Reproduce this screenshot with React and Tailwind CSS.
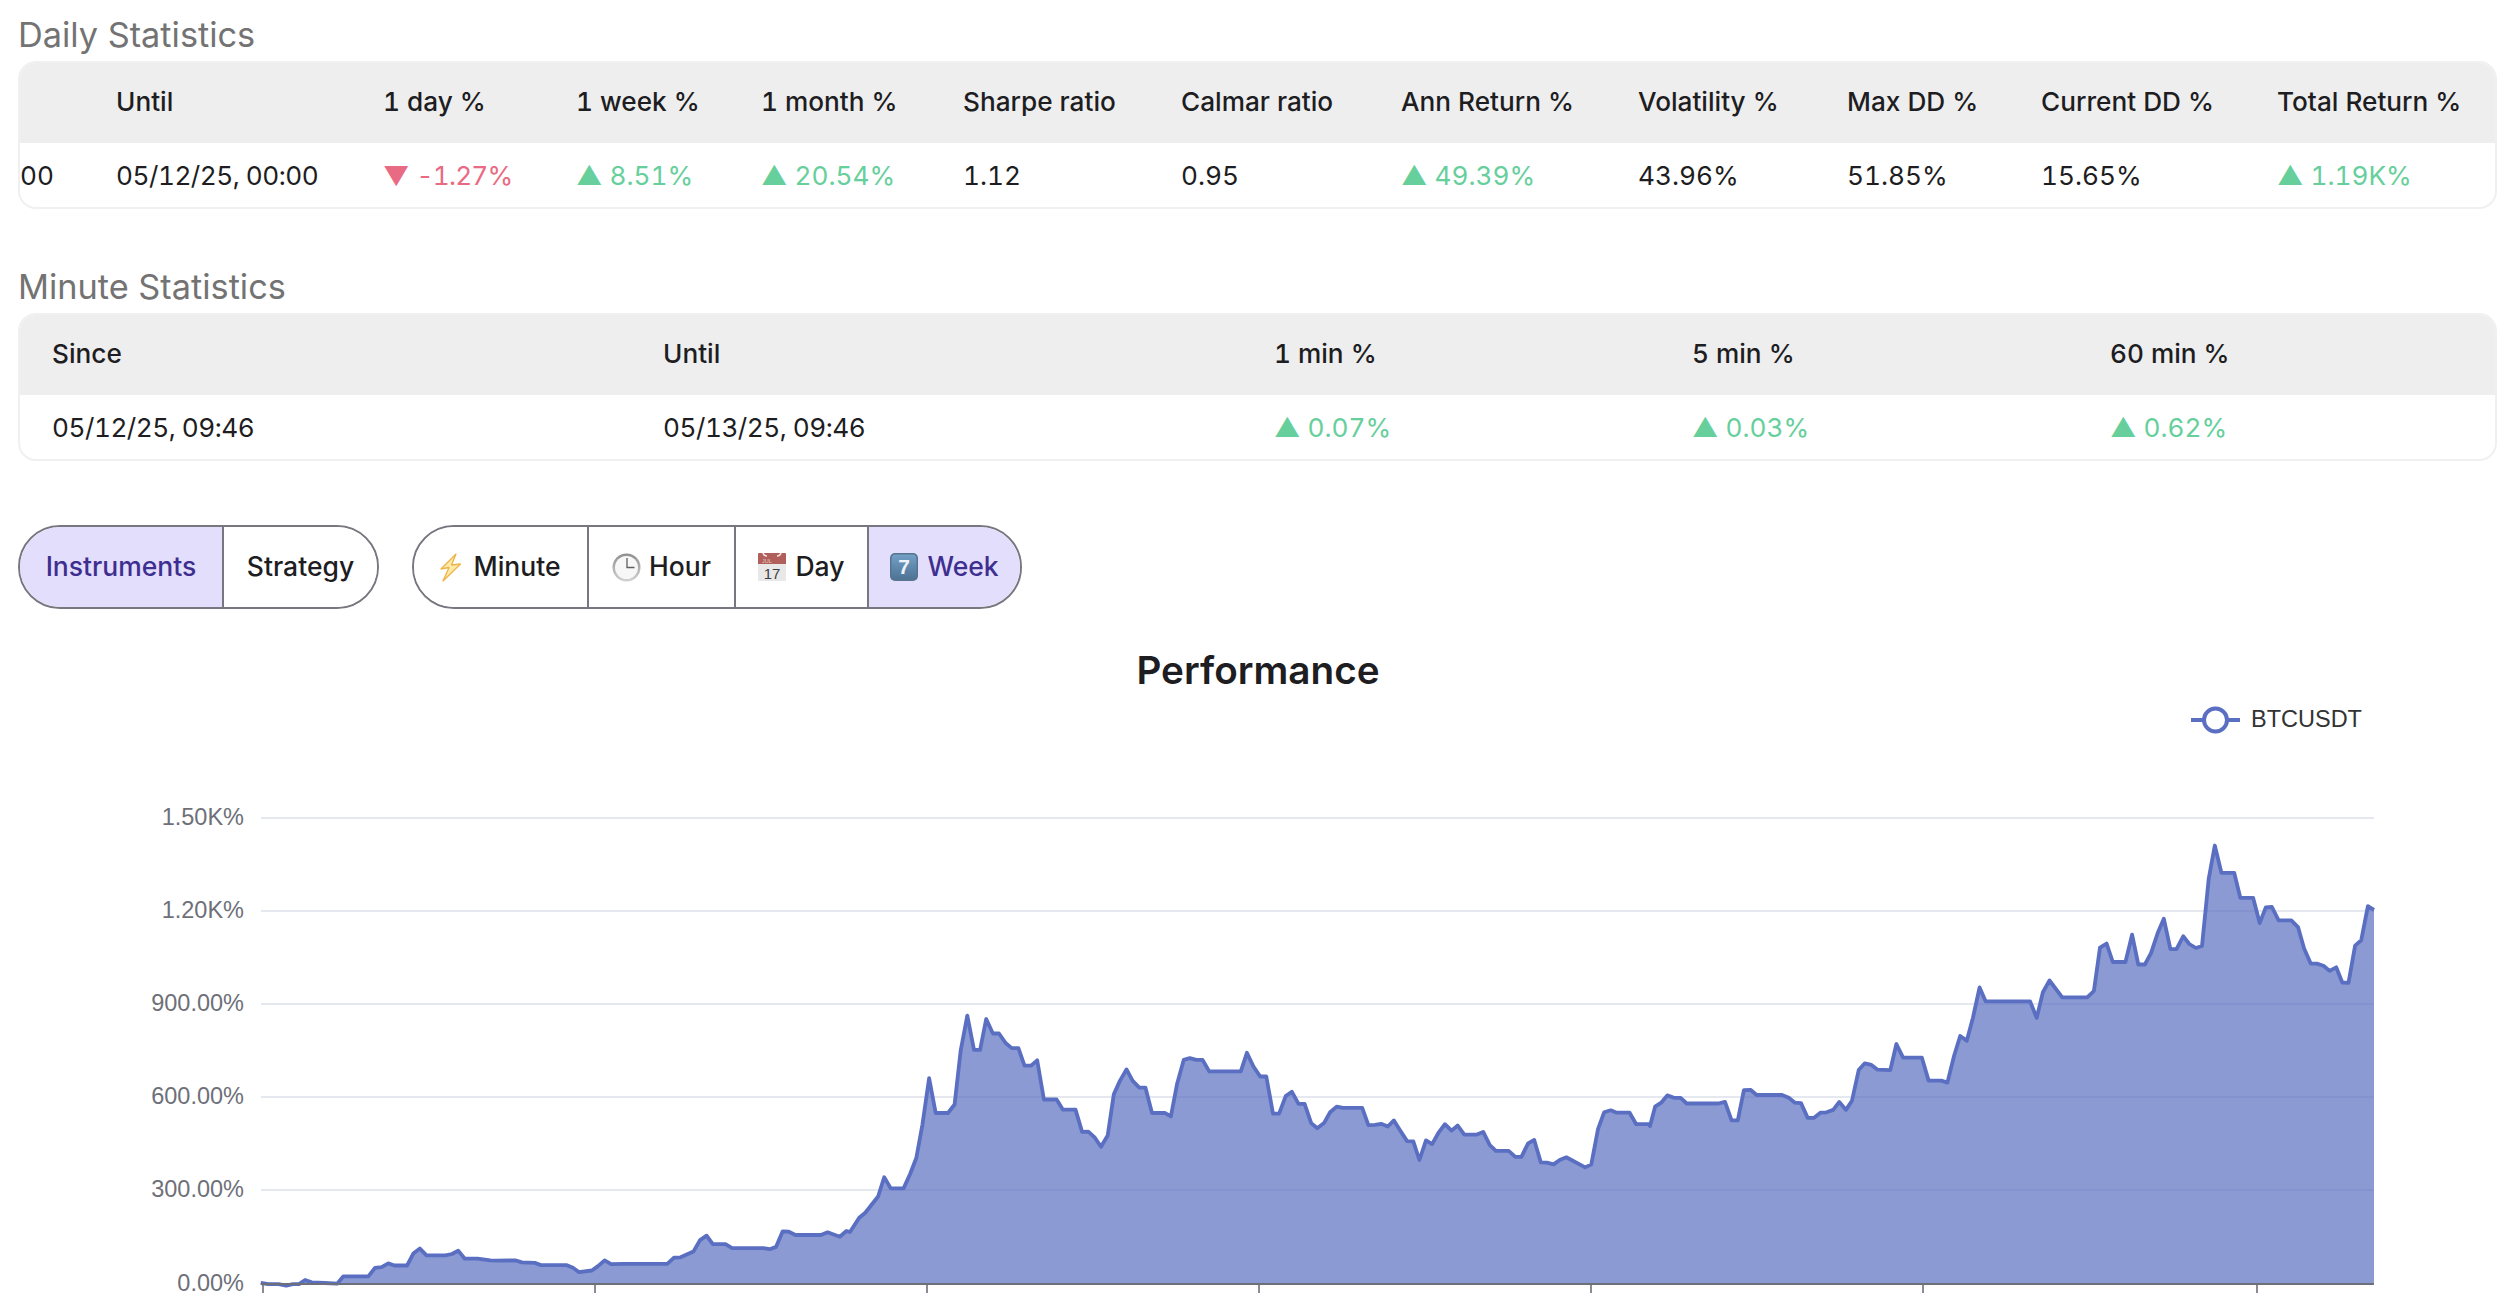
import React from 'react';

const INTER = { fontFamily: 'Inter, sans-serif' };

// traced from the chart, each block in its own crop coordinates
const seg1 = [[315,1488],[330,1491],[350,1491],[365,1496],[378,1491],[390,1491],[402,1479],[415,1486],[440,1488],[465,1490],[477,1468],[526,1468],[539,1443],[552,1441],[565,1430],[577,1436],[602,1436],[614,1401],[627,1386],[640,1406],[677,1406],[690,1402],[702,1392],[715,1416],[740,1416],[765,1421],[777,1422],[814,1421],[827,1427],[852,1428],[864,1435],[914,1435],[927,1443],[939,1456],[964,1451],[976,1438],[989,1421],[1002,1432],[1026,1431],[1112,1431],[1125,1413],[1138,1412],[1163,1395],[1176,1361],[1189,1348],[1201,1373],[1226,1373],[1239,1385],[1300,1385],[1313,1388],[1325,1381],[1338,1335],[1350,1336],[1363,1346],[1413,1346],[1426,1338],[1450,1351],[1463,1334]];
const seg2 = [[0,1337],[18,1295],[30,1280],[55,1232],[67,1175],[80,1208],[105,1208],[118,1165],[130,1118],[142,1020],[155,882],[168,985],[192,985],[205,960],[217,800],[230,697],[243,798],[255,798],[267,707],[280,750],[292,750],[305,778],[317,793],[330,793],[342,845],[355,845],[367,829],[380,945],[405,945],[417,975],[442,975],[455,1041],[467,1040],[480,1058],[492,1085],[505,1052],[517,930],[529,890],[542,856],[554,890],[567,910],[579,910],[592,985],[617,985],[629,995],[641,900],[654,828],[666,823],[679,828],[691,828],[704,862],[766,862],[778,807],[791,848],[804,877],[816,877],[829,987],[841,987],[854,935],[866,922],[879,958],[891,958],[904,1015],[916,1030],[929,1015],[941,983],[954,966],[966,970],[1004,970],[1016,1021],[1029,1020],[1041,1017],[1054,1025],[1066,1007],[1079,1038],[1092,1068],[1104,1069],[1116,1124],[1129,1066],[1141,1077],[1154,1042],[1166,1018],[1179,1037],[1191,1022],[1204,1049],[1229,1049],[1241,1041],[1254,1080],[1266,1097],[1291,1097],[1304,1115],[1316,1115],[1329,1075],[1341,1065],[1354,1131],[1366,1132],[1379,1137],[1391,1124],[1404,1116],[1441,1146],[1453,1137],[1466,1033],[1478,983],[1491,977],[1503,984],[1528,984],[1541,1018],[1566,1018]];
const seg3 = [[0,1110],[10,1062],[22,1052],[34,1034],[47,1040],[60,1040],[72,1054],[134,1054],[147,1050],[160,1096],[172,1096],[184,1021],[197,1020],[209,1033],[259,1033],[272,1040],[284,1052],[296,1053],[309,1090],[321,1090],[334,1077],[346,1076],[359,1070],[371,1050],[384,1070],[396,1047],[409,971],[421,954],[434,958],[446,970],[471,971],[483,906],[496,940],[533,940],[546,997],[571,997],[583,1002],[596,935],[608,886],[621,898],[633,840],[646,765],[658,800],[745,800],[758,841],[770,777],[783,748],[808,790],[857,790],[870,774],[882,666],[895,656],[907,702],[932,702],[945,634],[957,708],[970,708],[982,680],[995,630],[1007,594],[1020,670],[1032,670],[1045,638],[1057,657],[1070,667],[1082,662],[1095,495],[1107,412],[1120,480],[1145,480],[1157,542],[1182,542],[1195,605],[1207,566],[1219,565],[1232,598],[1257,598],[1270,615],[1282,668],[1295,706],[1307,706],[1320,711],[1332,724],[1345,715],[1357,753],[1369,754],[1382,661],[1394,648],[1407,563],[1419,572]];

const points = [
  ...seg1.map(([x, y]) => [100 + x / 1.96, 780 + y / 2.958]),
  ...seg2.map(([x, y]) => [850 + x / 1.96, 780 + y / 2.958]),
  ...seg3.map(([x, y]) => [1650 + x / 1.96, 680 + y / 2.489]),
];
const linePath = points.map(([x, y], i) => `${i ? 'L' : 'M'}${x.toFixed(1)} ${y.toFixed(1)}`).join(' ');
const areaPath = `${linePath} L2374 1284 L261 1284 Z`;

const grid = [
  ['1.50K%', 818],
  ['1.20K%', 911],
  ['900.00%', 1004],
  ['600.00%', 1097],
  ['300.00%', 1190],
  ['0.00%', 1284],
];
const ticks = [263, 595, 927, 1259, 1591, 1923, 2257];

const Change = ({ dir, children }) => (
  <span className={dir === 'down' ? 'text-[#e96b83]' : 'text-[#66cf9c]'}>
    {dir === 'down' ? '▼' : '▲'} <span className={dir === 'down' ? 'tracking-[-0.8px]' : ''}>{children}</span>
  </span>
);

const Stamp = ({ children }) => <span className="tracking-[-0.5px]">{children}</span>;

const daily = [
  ['', 'Until', '1 day %', '1 week %', '1 month %', 'Sharpe ratio', 'Calmar ratio', 'Ann Return %', 'Volatility %', 'Max DD %', 'Current DD %', 'Total Return %'],
  [
    '00',
    <Stamp>05/12/25, 00:00</Stamp>,
    <Change dir="down">-1.27%</Change>,
    <Change>8.51%</Change>,
    <Change>20.54%</Change>,
    '1.12',
    '0.95',
    <Change>49.39%</Change>,
    '43.96%',
    '51.85%',
    '15.65%',
    <Change>1.19K%</Change>,
  ],
];

const minute = [
  ['Since', 'Until', '1 min %', '5 min %', '60 min %'],
  [<Stamp>05/12/25, 09:46</Stamp>, <Stamp>05/13/25, 09:46</Stamp>, <Change>0.07%</Change>, <Change>0.03%</Change>, <Change>0.62%</Change>],
];

const StatTable = ({ rows, cols, clipFirst }) => (
  <div className="rounded-[18px] border-2 border-[#f0f0f0] overflow-hidden text-[26.2px] text-[#1d1d22] tabular-nums">
    <div className={`grid ${cols} h-[81px] items-center bg-[#eeeeef] -mt-[1px] pb-[1px] font-medium whitespace-nowrap`}>
      {rows[0].map((c, i) => (
        <div key={i} className={clipFirst && i === 0 ? '' : 'pl-[32px]'}>{c}</div>
      ))}
    </div>
    <div className={`grid ${cols} h-[64px] items-center pt-[1px] whitespace-nowrap`}>
      {rows[1].map((c, i) => (
        <div key={i} className={clipFirst && i === 0 ? '' : 'pl-[32px]'}>{c}</div>
      ))}
    </div>
  </div>
);

const Bolt = () => (
  <svg width="22" height="29" viewBox="0 0 22 29" className="mr-[11px]">
    <path d="M16 1 L1 16 L9 14.5 L3 28 L20.5 11 L11.5 12 Z" fill="#fdeaa8" stroke="#eeb44a" strokeWidth="1.3" strokeLinejoin="round" />
  </svg>
);

const Clock = () => (
  <svg width="29" height="29" viewBox="0 0 29 29" className="mr-[8px]">
    <defs>
      <linearGradient id="clockRim" x1="0" y1="0" x2="0" y2="1">
        <stop offset="0" stopColor="#8f8f8f" />
        <stop offset="1" stopColor="#d2d2d2" />
      </linearGradient>
    </defs>
    <circle cx="14.5" cy="14.5" r="14" fill="url(#clockRim)" />
    <circle cx="14.5" cy="14.5" r="11.5" fill="#f7f7f7" />
    <path d="M15 5 V14.5 H22.5" fill="none" stroke="#5f5f5f" strokeWidth="1.3" />
  </svg>
);

const Calendar = () => (
  <svg width="28" height="28" viewBox="0 0 28 28" className="mr-[9px]">
    <rect x="0" y="0" width="28" height="28" rx="1" fill="#e8e8e8" />
    <path d="M0 1 Q0 0 1 0 H27 Q28 0 28 1 V11 H0 Z" fill="#b05f5a" />
    <path d="M5 0 Q6 3 9 3 M19 3 Q22 3 23 0" fill="none" stroke="#f3e3e2" strokeWidth="1.6" />
    <text x="9" y="9.5" textAnchor="middle" fontSize="5.5" fontFamily="Liberation Sans, sans-serif" fill="#e9c9c7">JUL</text>
    <text x="14" y="25.5" textAnchor="middle" fontSize="15" fontFamily="Liberation Sans, sans-serif" fill="#3f3f3f">17</text>
  </svg>
);

const Keycap = () => (
  <svg width="28" height="28" viewBox="0 0 28 28" className="mr-[9px]">
    <defs>
      <linearGradient id="keyFace" x1="0" y1="0" x2="0" y2="1">
        <stop offset="0" stopColor="#74a0c6" />
        <stop offset="1" stopColor="#4f7496" />
      </linearGradient>
    </defs>
    <rect x="0" y="0" width="28" height="28" rx="5" fill="#54748f" />
    <rect x="1.5" y="1.5" width="25" height="24" rx="4" fill="url(#keyFace)" />
    <text x="14" y="21" textAnchor="middle" fontSize="21" fontWeight="700" fontFamily="Liberation Sans, sans-serif" fill="#eef3f8">7</text>
  </svg>
);

const Segmented = ({ items }) => (
  <div className="flex h-[84px] rounded-full border-2 border-[#79767f] overflow-hidden text-[26.5px] font-medium">
    {items.map((it, i) => (
      <div
        key={it.label}
        className={`flex items-center justify-center ${it.w} ${i ? 'border-l-2 border-[#79767f]' : ''} ${
          it.active ? 'bg-[#e2defb] text-[#3e2e90]' : 'bg-white text-[#1d1d22]'
        }`}
      >
        {it.icon}
        {it.label}
      </div>
    ))}
  </div>
);

const Chart = () => (
  <svg className="block w-[2484px] h-[702px]" viewBox="18 608 2484 702">
    <text x="1258" y="684" textAnchor="middle" fontSize="38.7" fontWeight="600" fill="#1d1d22" style={INTER}>
      Performance
    </text>
    <path d="M2191 720 H2240" stroke="#5a6fc1" strokeWidth="4" />
    <circle cx="2215.5" cy="720" r="11.5" fill="#fff" stroke="#5a6fc1" strokeWidth="4" />
    <text x="2251" y="727" fontSize="23.5" fill="#333" fontFamily="Liberation Sans, sans-serif">BTCUSDT</text>

    {grid.map(([label, y]) => (
      <g key={label}>
        <path d={`M261 ${y} H2374`} stroke="#e6e8f0" strokeWidth="2" />
        <text x="244" y={y + 7} textAnchor="end" fontSize="23.5" fill="#6e7079" fontFamily="Liberation Sans, sans-serif">
          {label}
        </text>
      </g>
    ))}

    <path d={areaPath} fill="#5a6fc1" fillOpacity="0.7" />
    <path d={linePath} fill="none" stroke="#5a6fc1" strokeWidth="3.8" strokeLinejoin="round" />

    <path d="M261 1284 H2374" stroke="#6e7079" strokeWidth="2" />
    {ticks.map((x) => (
      <path key={x} d={`M${x} 1284 V1293`} stroke="#6e7079" strokeWidth="1.6" />
    ))}
  </svg>
);

const App = () => {
  return (
    <div className="w-full h-[1310px] overflow-hidden bg-white pl-[18px] pr-[23px]" style={INTER}>
      <h2 className="h-[61px] pt-[14px] text-[34.3px] leading-[42px] text-[#737373]">Daily Statistics</h2>
      <StatTable
        rows={daily}
        clipFirst
        cols="grid-cols-[64px_267px_193px_185px_202px_218px_220px_237px_209px_194px_236px_251px]"
      />

      <h2 className="mt-[40px] h-[64px] pt-[17px] text-[34.3px] leading-[42px] text-[#737373]">Minute Statistics</h2>
      <StatTable rows={minute} cols="grid-cols-[611px_611px_418px_418px_418px]" />

      <div className="flex gap-[33px] mt-[64px]">
        <Segmented
          items={[
            { label: 'Instruments', active: true, w: 'w-[202px]' },
            { label: 'Strategy', w: 'w-[155px]' },
          ]}
        />
        <Segmented
          items={[
            { label: 'Minute', icon: <Bolt />, w: 'w-[173px]' },
            { label: 'Hour', icon: <Clock />, w: 'w-[147px]' },
            { label: 'Day', icon: <Calendar />, w: 'w-[133px]' },
            { label: 'Week', icon: <Keycap />, active: true, w: 'w-[153px]' },
          ]}
        />
      </div>

      <div className="-mt-[1px]">
        <Chart />
      </div>
    </div>
  );
};

export default App;
